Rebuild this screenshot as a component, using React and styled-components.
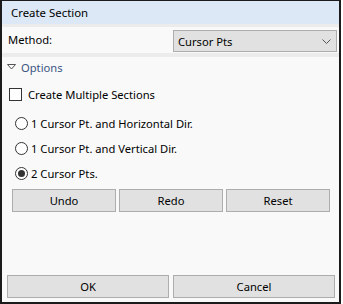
import React from "react";
import styled, { createGlobalStyle } from "styled-components";

const Global = createGlobalStyle`
  html, body { margin: 0; padding: 0; background: #ffffff; }
  body { font-family: "Noto Sans", "Open Sans", sans-serif; font-size: 11.2px; color: #000; }
  * { box-sizing: border-box; }
`;

const Frame = styled.div`
  width: 341px;
  height: 304px;
  border: 2px solid #1b1b1b;
  border-top-width: 1px;
  display: flex;
  flex-direction: column;
  background: #f9f9f9;
`;

const TitleBar = styled.div`
  height: 23px;
  background: #dce8f5;
  display: flex;
  align-items: center;
  padding-left: 9px;
  font-size: 11.4px;
`;

const Band = styled.div`
  height: ${(p) => p.$h}px;
  background: #ececec;
  flex: none;
`;

const MethodRow = styled.div`
  height: 26px;
  display: flex;
  align-items: flex-start;
  justify-content: space-between;
  padding: 3px 2px 0 6px;
  background: #f9f9f9;
`;

const Label = styled.span`
  line-height: 19px;
`;

const Select = styled.div`
  width: 164px;
  height: 22px;
  background: #e1e1e1;
  border: 1px solid #adadad;
  display: flex;
  align-items: center;
  justify-content: space-between;
  padding: 0 5px 0 4px;
`;

const Options = styled.div`
  flex: 1;
  display: flex;
  flex-direction: column;
  padding: 0 0 4px;
`;

const Header = styled.div`
  height: 20px;
  display: flex;
  align-items: center;
  gap: 5px;
  padding-left: 5px;
  color: #3b5582;
`;

const CheckRow = styled.label`
  margin-top: 11px;
  height: 13px;
  display: flex;
  align-items: center;
  gap: 6px;
  padding-left: 7px;
`;

const Box = styled.span`
  width: 13px;
  height: 13px;
  border: 1px solid #333;
  background: #fff;
  flex: none;
`;

const RadioList = styled.div`
  margin-top: 10px;
  display: flex;
  flex-direction: column;
`;

const RadioRow = styled.label`
  height: 25px;
  display: flex;
  align-items: center;
  gap: 3px;
  padding-left: 13px;
`;

const Circle = styled.span`
  width: 13px;
  height: 13px;
  border-radius: 50%;
  border: 1px solid #333;
  background: #fff;
  flex: none;
  display: flex;
  align-items: center;
  justify-content: center;
  &::after {
    content: "";
    width: 7px;
    height: 7px;
    border-radius: 50%;
    background: ${(p) => (p.$on ? "#333" : "transparent")};
  }
`;

const ButtonRow = styled.div`
  margin-top: 3px;
  display: flex;
  gap: 3px;
  padding-left: 10px;
`;

const Btn = styled.div`
  width: ${(p) => p.$w}px;
  height: 23px;
  background: #e1e1e1;
  border: 1px solid #adadad;
  display: flex;
  align-items: center;
  justify-content: center;
`;

const Footer = styled.div`
  margin-top: auto;
  display: flex;
  gap: 4px;
  padding-left: 5px;
`;

export default function App() {
  return (
    <>
      <Global />
      <Frame>
        <TitleBar>Create Section</TitleBar>
        <Band $h={3} />
        <MethodRow>
          <Label>Method:</Label>
          <Select>
            <span>Cursor Pts</span>
            <svg width="9" height="5" viewBox="0 0 9 5">
              <path d="M0.5 0.5 L4.5 4.5 L8.5 0.5" fill="none" stroke="#555" strokeWidth="1" />
            </svg>
          </Select>
        </MethodRow>
        <Band $h={4} />
        <Options>
          <Header>
            <svg width="9" height="6" viewBox="0 0 9 6">
              <path d="M0.5 0.5 L8.5 0.5 L4.5 5 Z" fill="none" stroke="#555" strokeWidth="1" />
            </svg>
            <span>Options</span>
          </Header>
          <CheckRow>
            <Box />
            <span>Create Multiple Sections</span>
          </CheckRow>
          <RadioList>
            <RadioRow>
              <Circle />
              <span>1 Cursor Pt. and Horizontal Dir.</span>
            </RadioRow>
            <RadioRow>
              <Circle />
              <span>1 Cursor Pt. and Vertical Dir.</span>
            </RadioRow>
            <RadioRow>
              <Circle $on />
              <span>2 Cursor Pts.</span>
            </RadioRow>
          </RadioList>
          <ButtonRow>
            <Btn $w={104}>Undo</Btn>
            <Btn $w={104}>Redo</Btn>
            <Btn $w={104}>Reset</Btn>
          </ButtonRow>
          <Footer>
            <Btn $w={162}>OK</Btn>
            <Btn $w={162}>Cancel</Btn>
          </Footer>
        </Options>
      </Frame>
    </>
  );
}
